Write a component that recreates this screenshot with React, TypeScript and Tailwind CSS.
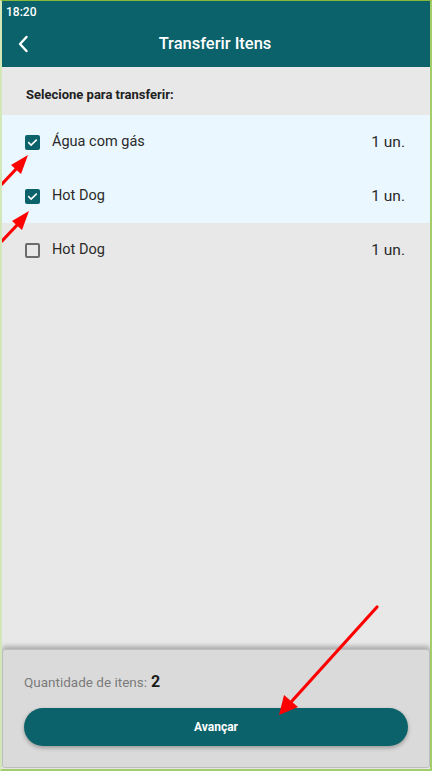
import React, { useState } from 'react';

const teal = 'bg-[#0b626a]';

interface Item {
    id: number;
    name: string;
    qty: string;
}

const items: Item[] = [
    { id: 1, name: 'Água com gás', qty: '1 un.' },
    { id: 2, name: 'Hot Dog', qty: '1 un.' },
    { id: 3, name: 'Hot Dog', qty: '1 un.' },
];

const Check: React.FC<{ on: boolean }> = ({ on }) =>
    on ? (
        <span className="w-[15px] h-[15px] rounded-[2px] bg-[#0b626a] flex items-center justify-center">
            <svg width="11" height="11" viewBox="0 0 24 24" fill="none" stroke="white" strokeWidth="3.5" strokeLinecap="square">
                <path d="M4 12.5l5 5L20 7" />
            </svg>
        </span>
    ) : (
        <span className="w-[15px] h-[15px] rounded-[2px] border-2 border-[#6b6b6b]" />
    );

export default function App() {
    const [selected, setSelected] = useState<number[]>([1, 2]);

    const toggle = (id: number) =>
        setSelected((s) => (s.includes(id) ? s.filter((x) => x !== id) : [...s, id]));

    return (
        <div
            className="relative w-[432px] h-[771px] flex flex-col overflow-hidden bg-[#e8e8e8] border-t border-r-2 border-b-2 border-l-2 border-t-[#86b83a] border-r-[#a3cc6a] border-b-[#a3cc6a] border-l-[#d3e8b8]"
            style={{ fontFamily: 'Roboto, "Liberation Sans", sans-serif' }}
        >
            {/* Status bar + app bar */}
            <div className={`${teal} text-white`}>
                <div className="h-[21px] px-[4px] flex items-center text-[12px] font-medium">18:20</div>
                <div className="relative h-[45px] flex items-center justify-center">
                    <svg className="absolute left-[14px] top-[12px]" width="16" height="20" viewBox="0 0 16 20" fill="none" stroke="white" strokeWidth="2.4" strokeLinecap="round" strokeLinejoin="round">
                        <path d="M10.5 3L4 10l6.5 7" />
                    </svg>
                    <span className="ml-[-2px] text-[16.5px] font-medium">Transferir Itens</span>
                </div>
            </div>

            {/* List */}
            <div className="flex-1 flex flex-col">
                <div className="h-[48px] flex items-end pb-[11px] pl-[24px] text-[13px] font-bold text-[#222]">
                    Selecione para transferir:
                </div>
                {items.map((it) => {
                    const on = selected.includes(it.id);
                    return (
                        <div
                            key={it.id}
                            onClick={() => toggle(it.id)}
                            className={`h-[54px] flex items-center pl-[23px] pr-[25px] cursor-pointer ${on ? 'bg-[#eaf7fe]' : ''}`}
                        >
                            <Check on={on} />
                            <span className="ml-[12px] flex-1 text-[14.5px] text-[#2a2a2a]">{it.name}</span>
                            <span className="pt-[1px] text-[15.5px] text-[#2a2a2a]">{it.qty}</span>
                        </div>
                    );
                })}
            </div>

            {/* Bottom panel */}
            <div className="mx-[0px] mb-[1px] rounded-[3px] bg-[#dadada] border border-[#bdbdbd] shadow-[0_-3px_4px_rgba(0,0,0,0.25)] px-[21px] pt-[20px] pb-[21px]">
                <div className="flex items-baseline gap-[4px]">
                    <span className="text-[13.5px] text-[#7a7a7a]">Quantidade de itens:</span>
                    <span className="text-[16px] font-bold text-[#1a1a1a]">2</span>
                </div>
                <button className="mt-[14px] w-full h-[38px] rounded-full bg-[#0b626a] text-white text-[12px] font-bold shadow-[0_2px_4px_rgba(0,0,0,0.3)]">
                    Avançar
                </button>
            </div>

            {/* Annotation arrows */}
            <svg className="absolute left-0 top-0 pointer-events-none" width="432" height="771">
                <g stroke="#ff0000" strokeWidth="3.2" strokeLinecap="round" fill="#ff0000">
                    <line x1="0" y1="183" x2="16" y2="166" />
                    <polygon points="26,154 9,164 19,173" stroke="none" />
                    <line x1="0" y1="240" x2="17" y2="222" />
                    <polygon points="27,210 10,220 20,229" stroke="none" />
                    <line x1="375" y1="606" x2="290" y2="700" />
                    <polygon points="277,714 282,694 296,706" stroke="none" />
                </g>
            </svg>
        </div>
    );
}
